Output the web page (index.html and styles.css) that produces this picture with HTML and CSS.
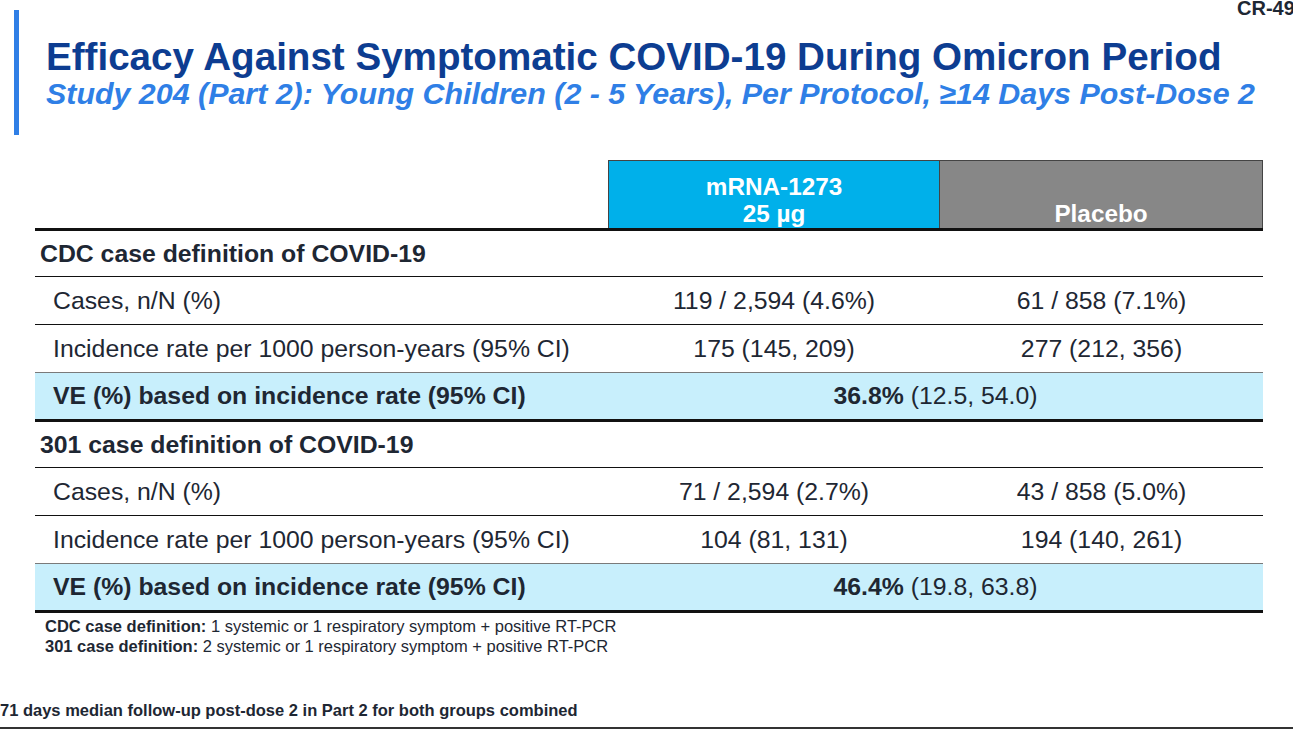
FILE: index.html
```html
<!DOCTYPE html>
<html lang="en">
<head>
<meta charset="utf-8">
<title>Efficacy Against Symptomatic COVID-19 During Omicron Period</title>
<link rel="stylesheet" href="styles.css">
</head>
<body>
<div class="slide">
  <div class="tag">CR-49</div>
  <header class="head">
    <h1 class="title">Efficacy Against Symptomatic COVID-19 During Omicron Period</h1>
    <h2 class="subtitle">Study 204 (Part 2): Young Children (2 - 5 Years), Per Protocol, ≥14 Days Post-Dose 2</h2>
  </header>

  <div class="table">
    <div class="row row-head">
      <div class="cell"></div>
      <div class="cell hcell hcell-vax"><span>mRNA-1273</span><span>25 µg</span></div>
      <div class="cell hcell hcell-pbo"><span>Placebo</span></div>
    </div>

    <div class="row row-section">
      <div class="cell label-section">CDC case definition of COVID-19</div>
    </div>
    <div class="row row-data">
      <div class="cell label">Cases, n/N (%)</div>
      <div class="cell val">119 / 2,594 (4.6%)</div>
      <div class="cell val">61 / 858 (7.1%)</div>
    </div>
    <div class="row row-data row-pre-ve">
      <div class="cell label">Incidence rate per 1000 person-years (95% CI)</div>
      <div class="cell val">175 (145, 209)</div>
      <div class="cell val">277 (212, 356)</div>
    </div>
    <div class="row row-ve">
      <div class="cell label label-bold">VE (%) based on incidence rate (95% CI)</div>
      <div class="cell val val-span"><b>36.8%</b>&nbsp;(12.5, 54.0)</div>
    </div>

    <div class="row row-section">
      <div class="cell label-section">301 case definition of COVID-19</div>
    </div>
    <div class="row row-data">
      <div class="cell label">Cases, n/N (%)</div>
      <div class="cell val">71 / 2,594 (2.7%)</div>
      <div class="cell val">43 / 858 (5.0%)</div>
    </div>
    <div class="row row-data row-pre-ve">
      <div class="cell label">Incidence rate per 1000 person-years (95% CI)</div>
      <div class="cell val">104 (81, 131)</div>
      <div class="cell val">194 (140, 261)</div>
    </div>
    <div class="row row-ve">
      <div class="cell label label-bold">VE (%) based on incidence rate (95% CI)</div>
      <div class="cell val val-span"><b>46.4%</b>&nbsp;(19.8, 63.8)</div>
    </div>
  </div>

  <div class="notes">
    <p><b>CDC case definition:</b> 1 systemic or 1 respiratory symptom + positive RT-PCR</p>
    <p><b>301 case definition:</b> 2 systemic or 1 respiratory symptom + positive RT-PCR</p>
  </div>

  <div class="footer">71 days median follow-up post-dose 2 in Part 2 for both groups combined</div>
</div>
</body>
</html>
```

FILE: styles.css
```css
* { box-sizing: border-box; }
html, body { margin: 0; padding: 0; background: #ffffff; }
body {
  font-family: "Liberation Sans", Arial, sans-serif;
  color: #1e2733;
  width: 1293px;
  height: 745px;
  overflow: hidden;
}
.slide {
  position: relative;
  width: 1293px;
  height: 745px;
  padding-top: 10px;
}
.tag {
  position: absolute;
  top: -2px;
  left: 1237px;
  font-size: 20px;
  font-weight: 700;
  color: #1e2733;
  white-space: nowrap;
  line-height: 1;
}
.head {
  margin-left: 14px;
  border-left: 5px solid #2f7fe6;
  padding: 25px 0 24px 27px;
  height: 125px;
}
.title {
  margin: 0;
  font-size: 38.6px;
  font-weight: 700;
  line-height: normal;
  color: #0d3d91;
  white-space: nowrap;
}
.subtitle {
  margin: -3px 0 0 0;
  font-size: 30.4px;
  font-weight: 700;
  font-style: italic;
  line-height: normal;
  color: #2f7fe6;
  white-space: nowrap;
}

.table {
  margin: 25px 0 0 35px;
  width: 1228px;
}
.row {
  display: grid;
  grid-template-columns: 573px 332px 323px;
  font-size: 24.8px;
}
.cell {
  display: flex;
  align-items: center;
  white-space: nowrap;
}
.row-head {
  height: 71px;
  border-bottom: 3px solid #111111;
}
.hcell {
  flex-direction: column;
  justify-content: flex-end;
  align-items: center;
  padding-bottom: 1px;
  color: #ffffff;
  font-size: 24.3px;
  font-weight: 700;
  line-height: 27px;
  border-top: 1px solid #444444;
  border-right: 1px solid #444444;
}
.hcell-vax {
  background: #00b0ea;
  border-left: 1px solid #444444;
}
.hcell-pbo {
  background: #878787;
}
.row-section {
  height: 46px;
  border-bottom: 1px solid #111111;
}
.label-section {
  grid-column: 1 / 4;
  padding-left: 5px;
  font-weight: 700;
}
.row-data {
  height: 48px;
  border-bottom: 1px solid #111111;
}
.row-pre-ve {
  border-bottom-color: #7a7a7a;
}
.label {
  padding-left: 18px;
}
.label-bold {
  font-weight: 700;
}
.val {
  justify-content: center;
}
.val-span {
  grid-column: 2 / 4;
}
.val b { font-weight: 700; }
.row-ve {
  height: 49px;
  background: #c8effc;
  border-bottom: 3px solid #111111;
}

.notes {
  margin: 3px 0 0 45px;
  font-size: 16.5px;
  line-height: 20px;
}
.notes p { margin: 0; }
.notes b { font-weight: 700; }

.footer {
  margin-top: 44px;
  font-size: 16.5px;
  font-weight: 700;
  line-height: 20px;
  padding-bottom: 7px;
  border-bottom: 2px solid #333333;
  white-space: nowrap;
}
```
